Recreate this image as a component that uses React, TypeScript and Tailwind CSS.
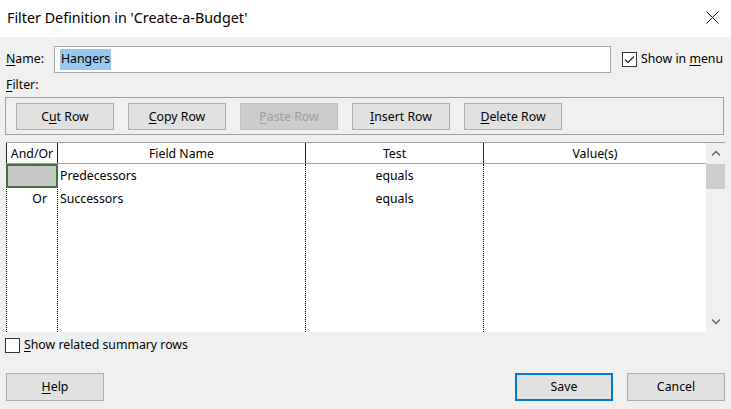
import React from "react";

const U = ({ children }: { children: React.ReactNode }) => (
  <span className="underline underline-offset-2 decoration-1">{children}</span>
);

function Btn({
  children,
  className = "",
  disabled = false,
}: {
  children: React.ReactNode;
  className?: string;
  disabled?: boolean;
}) {
  return (
    <div
      className={
        "flex h-[27px] w-[98px] shrink-0 items-center justify-center border pt-[1px] " +
        (disabled
          ? "border-[#bfbfbf] bg-[#cccccc] text-[#a0a0a0] "
          : "border-[#adadad] bg-[#e1e1e1] text-black ") +
        className
      }
    >
      {children}
    </div>
  );
}

function Check({ checked }: { checked?: boolean }) {
  return (
    <div className="flex h-[15px] w-[15px] shrink-0 items-center justify-center border border-[#333333] bg-white">
      {checked && (
        <svg width="13" height="13" viewBox="0 0 13 13">
          <path d="M2 6.5 L5 9.5 L11 3.5" fill="none" stroke="#222" strokeWidth="1.1" />
        </svg>
      )}
    </div>
  );
}

export default function App() {
  const dotted = "border-r border-dotted border-r-black";
  return (
    <div
      className="relative h-[409px] w-[731px] overflow-hidden bg-[#f0f0f0] text-[12.3px] leading-none text-black"
      style={{ fontFamily: '"Noto Sans", "Open Sans", sans-serif' }}
    >
      {/* Title bar */}
      <div className="flex h-[37px] items-center justify-between bg-white pl-[7px] pr-[12px]">
        <div className="text-[14.3px] text-black">Filter Definition in 'Create-a-Budget'</div>
        <svg width="13" height="13" viewBox="0 0 13 13" className="mt-[-2px]">
          <path d="M0.5 0.5 L12.5 12.5 M12.5 0.5 L0.5 12.5" stroke="#111" strokeWidth="1" />
        </svg>
      </div>

      {/* Name row */}
      <div className="mt-[9px] flex h-[27px] items-center">
        <div className="w-[54px] pl-[6px]">
          <U>N</U>ame:
        </div>
        <div className="flex h-[27px] w-[557px] items-center border border-[#a8a8a8] bg-white pl-[5px]">
          <span className="bg-[#99c9ef] px-[1px] py-[4px]">Hangers</span>
        </div>
        <div className="ml-[11px] flex items-center">
          <Check checked />
          <span className="ml-[4px]">
            Show in <U>m</U>enu
          </span>
        </div>
      </div>

      {/* Filter label */}
      <div className="flex h-[24px] items-center pl-[6px]">
        <span>
          <U>F</U>ilter:
        </span>
      </div>

      {/* Button group */}
      <div className="ml-[5px] flex h-[38px] w-[719px] items-start border border-[#a0a0a0] pl-[10px] pt-[5px]">
        <Btn>
          C<U>u</U>t Row
        </Btn>
        <Btn className="ml-[14px]">
          <U>C</U>opy Row
        </Btn>
        <Btn className="ml-[14px]" disabled>
          <U>P</U>aste Row
        </Btn>
        <Btn className="ml-[14px]">
          <U>I</U>nsert Row
        </Btn>
        <Btn className="ml-[14px]">
          <U>D</U>elete Row
        </Btn>
      </div>

      {/* Grid */}
      <div className="ml-[6px] mt-[7px] flex h-[190px] w-[719px] border-t border-[#a0a0a0]">
        <div className="flex flex-1 flex-col bg-white">
          {/* header */}
          <div className="flex h-[21px] shrink-0 items-center border-b border-[#a0a0a0]">
            <div className="flex h-full w-[52px] items-center justify-center border-l border-r border-[#222] pt-[3px]">And/Or</div>
            <div className="flex h-full w-[248px] items-center justify-center border-r border-[#222] pt-[3px]">Field Name</div>
            <div className="flex h-full w-[178px] items-center justify-center border-r border-[#222] pt-[3px]">Test</div>
            <div className="flex h-full flex-1 items-center justify-center pt-[3px]">Value(s)</div>
          </div>
          {/* body */}
          <div className="relative flex flex-1">
            <div className="flex w-[52px] flex-col border-l border-dotted border-l-black border-r border-r-black" style={{ borderRightStyle: "dotted" }}>
              <div className="h-[24px] border-2 border-[#447342] bg-[#c6c6c6] ml-[-1px] mr-[-1px]" />
              <div className="flex h-[22px] items-center justify-end pr-[10px]">Or</div>
            </div>
            <div className={"flex w-[248px] flex-col " + dotted}>
              <div className="flex h-[24px] items-center pl-[2px]">Predecessors</div>
              <div className="flex h-[22px] items-center pl-[2px]">Successors</div>
            </div>
            <div className={"flex w-[178px] flex-col " + dotted}>
              <div className="flex h-[24px] items-center justify-center">equals</div>
              <div className="flex h-[22px] items-center justify-center">equals</div>
            </div>
            <div className="flex-1" />
          </div>
        </div>
        {/* scrollbar */}
        <div className="flex w-[19px] flex-col bg-[#f0f0f0]">
          <div className="flex h-[21px] items-center justify-center">
            <svg width="10" height="7" viewBox="0 0 10 7">
              <path d="M1 5.5 L5 1.5 L9 5.5" fill="none" stroke="#606060" strokeWidth="1.4" />
            </svg>
          </div>
          <div className="h-[25px] bg-[#cdcdcd]" />
          <div className="flex-1" />
          <div className="flex h-[21px] items-center justify-center">
            <svg width="10" height="7" viewBox="0 0 10 7">
              <path d="M1 1.5 L5 5.5 L9 1.5" fill="none" stroke="#606060" strokeWidth="1.4" />
            </svg>
          </div>
        </div>
      </div>

      {/* summary rows checkbox */}
      <div className="ml-[5px] mt-[6px] flex items-center">
        <Check />
        <span className="ml-[4px]">
          <U>S</U>how related summary rows
        </span>
      </div>

      {/* bottom buttons */}
      <div className="mt-[20px] flex items-center">
        <div className="ml-[6px] flex h-[28px] w-[98px] items-center justify-center border border-[#adadad] bg-[#e1e1e1] pt-[1px]">
          <U>H</U>elp
        </div>
        <div className="ml-[411px] flex h-[28px] w-[98px] items-center justify-center border-2 border-[#0078d7] bg-[#e1e1e1] pt-[1px]">
          Save
        </div>
        <div className="ml-[14px] flex h-[28px] w-[98px] items-center justify-center border border-[#adadad] bg-[#e1e1e1] pt-[1px]">
          Cancel
        </div>
      </div>
    </div>
  );
}
